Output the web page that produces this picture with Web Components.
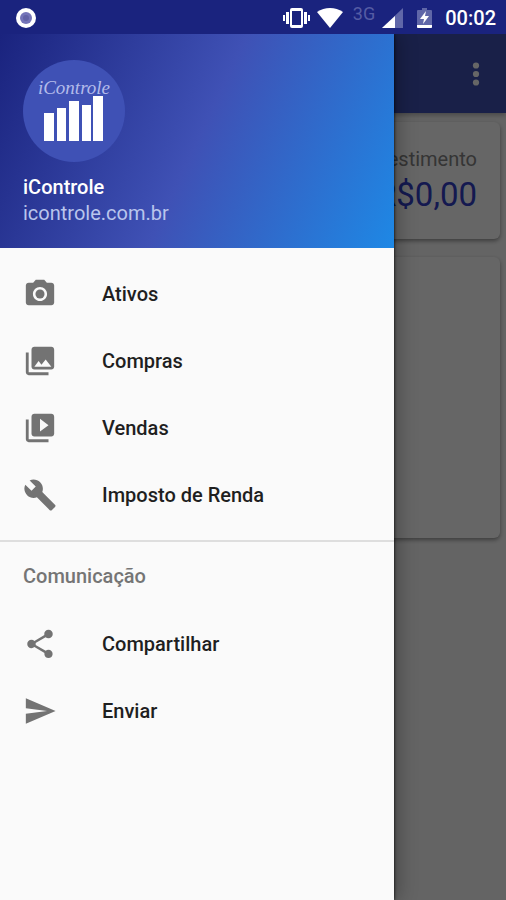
<!DOCTYPE html>
<html lang="pt-BR">
<head>
<meta charset="UTF-8">
<meta name="viewport" content="width=device-width, initial-scale=1">
<title>iControle</title>
<style>
    * {
        box-sizing: border-box;
    }

    html, body {
        margin: 0;
        min-height: 100%;
    }

    body {
        font-family: Roboto, "Liberation Sans", sans-serif;
        font-size: 20px;
        background: #fafafa;
    }
</style>
</head>
<body>
<icontrole-app></icontrole-app>

<script>
const ICONS = {
    camera: '<circle cx="12" cy="12" r="3.2"/><path d="M9 2 7.17 4H4c-1.1 0-2 .9-2 2v12c0 1.1.9 2 2 2h16c1.1 0 2-.9 2-2V6c0-1.1-.9-2-2-2h-3.170L15 2H9zm3 15c-2.760 0-5-2.240-5-5s2.240-5 5-5 5 2.240 5 5-2.240 5-5 5z"/>',
    gallery: '<path d="M22 16V4c0-1.100-.9-2-2-2H8c-1.100 0-2 .9-2 2v12c0 1.100.9 2 2 2h12c1.100 0 2-.9 2-2zm-11-4 2.030 2.710L16 11l4 5H8l3-4zM2 6v14c0 1.100.9 2 2 2h14v-2H4V6H2z"/>',
    video: '<path d="M4 6H2v14c0 1.100.9 2 2 2h14v-2H4V6zm16-4H8c-1.100 0-2 .9-2 2v12c0 1.100.9 2 2 2h12c1.100 0 2-.9 2-2V4c0-1.100-.9-2-2-2zm-8 12.500v-9l6 4.500-6 4.500z"/>',
    wrench: '<path d="m22.700 19-9.100-9.100c.9-2.300.4-5-1.500-6.900-2-2-5-2.400-7.400-1.300L9 6 6 9 1.600 4.700C.4 7.100.9 10.100 2.900 12.100c1.900 1.900 4.600 2.400 6.900 1.500l9.100 9.100c.4.4 1 .4 1.400 0l2.300-2.300c.5-.4.5-1.100.1-1.400z"/>',
    share: '<path d="M18 16.080c-.76 0-1.440.3-1.960.77L8.910 12.700c.05-.23.09-.46.09-.7s-.04-.47-.09-.7l7.050-4.110c.54.5 1.250.81 2.040.81 1.660 0 3-1.340 3-3s-1.340-3-3-3-3 1.340-3 3c0 .24.04.47.09.7L8.040 9.810C7.500 9.310 6.790 9 6 9c-1.660 0-3 1.340-3 3s1.340 3 3 3c.79 0 1.500-.31 2.040-.81l7.120 4.160c-.05.21-.08.43-.08.65 0 1.610 1.310 2.920 2.920 2.920s2.920-1.310 2.920-2.920-1.310-2.920-2.920-2.920z"/>',
    send: '<path d="M2.010 21 23 12 2.010 3 2 10l15 2-15 2z"/>'
};

class StatusBar extends HTMLElement {
    constructor() {
        super();
        this.attachShadow({ mode: 'open' });
        this.render();
    }

    render() {
        this.shadowRoot.innerHTML = `
            <style>
                :host {
                    display: flex;
                    align-items: center;
                    height: 34px;
                    padding: 2px 10px 0 15px;
                    box-sizing: border-box;
                    background: #1a237e;
                    color: #fff;
                }

                svg {
                    display: block;
                    fill: currentColor;
                }

                .icons {
                    display: flex;
                    align-items: center;
                    margin-left: auto;
                }

                .vibrate { margin-right: 7px; }
                .wifi { margin-right: 10px; }

                .network {
                    align-self: flex-start;
                    margin-right: 7px;
                    font-size: 18px;
                    line-height: 16px;
                    color: #555ca4;
                }

                .signal { margin-right: 14px; }
                .battery { margin-right: 13px; }

                time {
                    font-weight: 500;
                    line-height: 24px;
                }
            </style>

            <svg width="22" height="22" viewBox="0 0 22 22" aria-hidden="true">
                <circle cx="11" cy="11" r="10"/>
                <circle cx="11" cy="11" r="6" fill="#7474b8"/>
                <circle cx="11" cy="11" r="3" fill="#6262a6"/>
            </svg>
            <div class="icons">
                <svg class="vibrate" width="27" height="22" viewBox="0 0 27 22" aria-hidden="true">
                    <path d="M0 8h2v6H0zM3 5h3v12H3zM21 5h3v12h-3zM25 8h2v6h-2z"/>
                    <path fill-rule="evenodd" d="M9 1h9q2 0 2 2v16q0 2-2 2H9q-2 0-2-2V3q0-2 2-2zm0 3v14h9V4z"/>
                </svg>
                <svg class="wifi" width="26" height="22" viewBox="0 0 26 22" aria-hidden="true">
                    <path d="M13 21 0 5q6-4 13-4t13 4z"/>
                </svg>
                <span class="network">3G</span>
                <svg class="signal" width="21" height="22" viewBox="0 0 21 22" aria-hidden="true">
                    <path d="M21 1v20H0z" fill="#6067a8"/>
                    <path d="M13 9v12H0z"/>
                </svg>
                <svg class="battery" width="15" height="22" viewBox="0 0 15 22" aria-hidden="true">
                    <path d="M5 1h5v2h4q1 0 1 1v16q0 1-1 1H1q-1 0-1-1V4q0-1 1-1h4z" fill="#6067a8"/>
                    <path d="M0 18h15v2q0 1-1 1H1q-1 0-1-1z"/>
                    <path d="M9 4 3 12h4l-1 5 6-8H8z"/>
                </svg>
                <time datetime="00:02">00:02</time>
            </div>
        `;
    }
}

class AppToolbar extends HTMLElement {
    constructor() {
        super();
        this.attachShadow({ mode: 'open' });
        this.render();
    }

    render() {
        this.shadowRoot.innerHTML = `
            <style>
                :host {
                    display: flex;
                    align-items: center;
                    justify-content: flex-end;
                    height: 79px;
                    padding-right: 13px;
                    box-sizing: border-box;
                    background: #3f51b5;
                    box-shadow: 0 2px 5px rgba(0,0,0,0.3);
                }

                button {
                    display: flex;
                    padding: 0;
                    border: 0;
                    background: none;
                    color: #fff;
                }

                svg {
                    fill: currentColor;
                }
            </style>

            <button type="button" aria-label="Mais opções">
                <svg width="34" height="34" viewBox="0 0 24 24">
                    <circle cx="12" cy="6" r="2.200"/>
                    <circle cx="12" cy="12" r="2.200"/>
                    <circle cx="12" cy="18" r="2.200"/>
                </svg>
            </button>
        `;
    }
}

class SummaryCard extends HTMLElement {
    constructor() {
        super();
        this.attachShadow({ mode: 'open' });
        this.render();
    }

    render() {
        this.shadowRoot.innerHTML = `
            <style>
                :host {
                    display: block;
                    padding: 24px 23px 22px;
                    border-radius: 6px;
                    background: #fff;
                    box-shadow: 0 2px 4px rgba(0,0,0,0.4);
                    text-align: right;
                }
            </style>
            <slot></slot>
        `;
    }
}

class AppLogo extends HTMLElement {
    constructor() {
        super();
        this.attachShadow({ mode: 'open' });
        this.render();
    }

    render() {
        this.shadowRoot.innerHTML = `
            <style>
                :host {
                    display: flex;
                    flex-direction: column;
                    align-items: center;
                    width: 102px;
                    height: 102px;
                    padding-top: 18px;
                    box-sizing: border-box;
                    border-radius: 50%;
                    background: #3f51b5;
                }

                span {
                    font: italic 19px/20px "Liberation Serif", serif;
                    color: #b3bbea;
                }

                svg {
                    display: block;
                    margin-top: -3px;
                    fill: #fff;
                }
            </style>

            <span>iControle</span>
            <svg width="60" height="47" viewBox="0 0 60 47" aria-hidden="true">
                <path d="M0 18h10v28H0zM13 13h9v33h-9zM25 6h10v40H25zM38 10h9v36h-9zM49 1h10v45H49z"/>
            </svg>
        `;
    }
}

class DrawerItem extends HTMLElement {
    constructor() {
        super();
        this.attachShadow({ mode: 'open' });
        this.render();
    }

    render() {
        const icon = this.getAttribute('icon');

        this.shadowRoot.innerHTML = `
            <style>
                :host {
                    display: block;
                }

                a {
                    display: flex;
                    align-items: center;
                    gap: 45px;
                    height: 67px;
                    padding: 0 23px;
                    color: #1f1f1f;
                    font-weight: 500;
                    text-decoration: none;
                }

                svg {
                    flex: none;
                    fill: #737373;
                }
            </style>

            <a href="#${icon}">
                <svg width="34" height="34" viewBox="0 0 24 24" aria-hidden="true">${ICONS[icon]}</svg>
                <slot></slot>
            </a>
        `;
    }
}

class NavDrawer extends HTMLElement {
    constructor() {
        super();
        this.attachShadow({ mode: 'open' });

        this.main = [
            { icon: 'camera', label: 'Ativos' },
            { icon: 'gallery', label: 'Compras' },
            { icon: 'video', label: 'Vendas' },
            { icon: 'wrench', label: 'Imposto de Renda' }
        ];

        this.contact = [
            { icon: 'share', label: 'Compartilhar' },
            { icon: 'send', label: 'Enviar' }
        ];

        this.render();
    }

    renderItems(items) {
        return items.map(item => `
            <drawer-item icon="${item.icon}">${item.label}</drawer-item>
        `).join('');
    }

    render() {
        this.shadowRoot.innerHTML = `
            <style>
                :host {
                    display: block;
                    background: #fafafa;
                    box-shadow: 0 0 3px #000, 4px 0 18px rgba(0,0,0,0.3);
                }

                header {
                    padding: 26px 23px 21px;
                    background: linear-gradient(115deg, #1a237e, #3f51b5 50%, #1e88e5);
                    color: #fff;
                }

                .name {
                    margin-top: 12px;
                    font-weight: 500;
                    line-height: 26px;
                }

                .site {
                    line-height: 27px;
                    color: #b9c5ec;
                }

                nav {
                    padding-top: 12px;
                }

                hr {
                    margin: 12px 0 0;
                    border: 0;
                    border-top: 2px solid #dedede;
                }

                h2 {
                    margin: 0;
                    padding-left: 23px;
                    font-size: 20px;
                    font-weight: 500;
                    line-height: 68px;
                    color: #757575;
                }
            </style>

            <header>
                <app-logo></app-logo>
                <div class="name">iControle</div>
                <div class="site">icontrole.com.br</div>
            </header>
            <nav>
                ${this.renderItems(this.main)}
                <hr>
                <h2>Comunicação</h2>
                ${this.renderItems(this.contact)}
            </nav>
        `;
    }
}

class IcontroleApp extends HTMLElement {
    constructor() {
        super();
        this.attachShadow({ mode: 'open' });
        this.render();
    }

    render() {
        this.shadowRoot.innerHTML = `
            <style>
                :host {
                    display: grid;
                    grid-template-columns: minmax(0, 1fr) 112px;
                    grid-template-rows: auto 1fr;
                    min-height: 100vh;
                    overflow: hidden;
                }

                status-bar {
                    grid-column: 1 / -1;
                    z-index: 1;
                }

                .page {
                    grid-area: 2 / 1 / 3 / -1;
                    background: #fafafa;
                }

                .cards {
                    display: grid;
                    gap: 18px;
                    padding: 9px 6px;
                }

                .label {
                    line-height: 27px;
                    color: #858585;
                }

                .value {
                    font-size: 33px;
                    line-height: 44px;
                    color: #3340c8;
                }

                .chart {
                    min-height: 235px;
                }

                .scrim {
                    grid-area: 2 / 1 / 3 / -1;
                    background: rgba(0,0,0,0.6);
                }

                nav-drawer {
                    grid-area: 2 / 1 / 3 / 2;
                }
            </style>

            <status-bar></status-bar>
            <div class="page">
                <app-toolbar></app-toolbar>
                <div class="cards">
                    <summary-card>
                        <div class="label">Investimento</div>
                        <div class="value">R$0,00</div>
                    </summary-card>
                    <summary-card>
                        <div class="chart"></div>
                    </summary-card>
                </div>
            </div>
            <div class="scrim"></div>
            <nav-drawer></nav-drawer>
        `;
    }
}

customElements.define('status-bar', StatusBar);
customElements.define('app-toolbar', AppToolbar);
customElements.define('summary-card', SummaryCard);
customElements.define('app-logo', AppLogo);
customElements.define('drawer-item', DrawerItem);
customElements.define('nav-drawer', NavDrawer);
customElements.define('icontrole-app', IcontroleApp);
</script>
</body>
</html>
